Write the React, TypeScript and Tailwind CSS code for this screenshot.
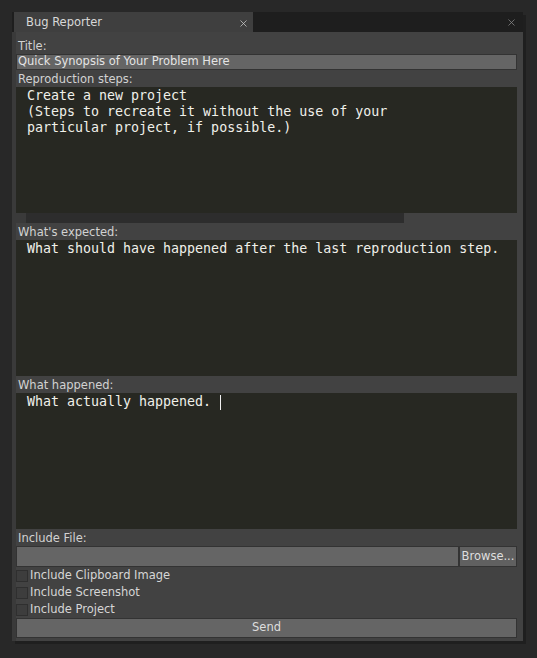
import { X } from "lucide-react";

const sans = { fontFamily: '"DejaVu Sans", "Liberation Sans", sans-serif' };
const mono = { fontFamily: '"DejaVu Sans Mono", "Liberation Mono", monospace' };

function Label({ text }: { text: string }) {
  return (
    <div className="h-[17px] pl-[2px] pt-[1px] text-[11.5px] leading-[16px] text-[#d2d2d2]">
      {text}
    </div>
  );
}

function Editor({ lines, cursor, height }: { lines: string[]; cursor?: boolean; height: string }) {
  return (
    <div
      className={`${height} whitespace-pre bg-[#272822] pl-[11px] pt-[1px] text-[13.3px] leading-[16px] text-[#f0f0ea]`}
      style={mono}
    >
      {lines.map((line, i) => (
        <div key={i} className="flex items-center">
          <span>{line}</span>
          {cursor && i === lines.length - 1 && (
            <span className="ml-[1px] inline-block h-[15px] w-px bg-[#f0f0f0]" />
          )}
        </div>
      ))}
    </div>
  );
}

function Check({ text }: { text: string }) {
  return (
    <label className="flex h-[17px] items-center gap-[2px] text-[11.5px] text-[#d6d6d6]">
      <span className="h-3 w-3 border border-[#2f2f2f] bg-[#3d3d3d]" />
      {text}
    </label>
  );
}

export default function App() {
  return (
    <div className="min-h-[658px] bg-[#282828] pl-3 pt-3" style={sans}>
      <div className="w-[511px] shadow-[3px_3px_0_#1f1f1f]">
        <div className="flex h-5 bg-[#1e1e1e] pl-[2px] pr-[6px]">
          <div className="flex w-[239px] items-center justify-between bg-[#3f3f3f] pl-3 pr-[4px] pt-[2px]">
            <span className="text-[11.5px] text-[#d8d8d8]">Bug Reporter</span>
            <X size={11} strokeWidth={1.6} className="text-[#d0d0d0]" />
          </div>
          <div className="flex flex-1 items-center justify-end">
            <X size={11} strokeWidth={1.6} className="text-[#8c8c8c]" />
          </div>
        </div>

        <div className="flex flex-col border-l-4 border-[#3a3a3a] bg-[#424242] pb-[3px] pr-[6px] pt-[5px]">
          <Label text="Title:" />
          <div className="flex h-4 items-center border border-[#333333] bg-[#656565] pl-[1px] text-[11.5px] text-[#e4e4e4]">
            Quick Synopsis of Your Problem Here
          </div>
          <Label text="Reproduction steps:" />
          <Editor
            height="h-[126px]"
            lines={[
              "Create a new project",
              "(Steps to recreate it without the use of your",
              "particular project, if possible.)",
            ]}
          />
          <div className="flex h-[10px]">
            <div className="w-[10px] bg-[#3a3a3a]" />
            <div className="w-[378px] bg-[#2d2d2d]" />
          </div>
          <Label text="What's expected:" />
          <Editor
            height="h-[136px]"
            lines={["What should have happened after the last reproduction step."]}
          />
          <Label text="What happened:" />
          <Editor height="h-[136px]" lines={["What actually happened. "]} cursor />
          <Label text="Include File:" />
          <div className="flex h-[21px]">
            <div className="flex-1 border border-[#333333] bg-[#656565]" />
            <button className="w-[58px] border border-[#333333] bg-[#606060] text-[11.5px] text-[#dedede]">
              Browse...
            </button>
          </div>
          <Check text="Include Clipboard Image" />
          <Check text="Include Screenshot" />
          <Check text="Include Project" />
          <button className="h-5 border border-[#333333] bg-[#656565] text-[11.5px] text-[#dedede]">
            Send
          </button>
        </div>
      </div>
    </div>
  );
}
